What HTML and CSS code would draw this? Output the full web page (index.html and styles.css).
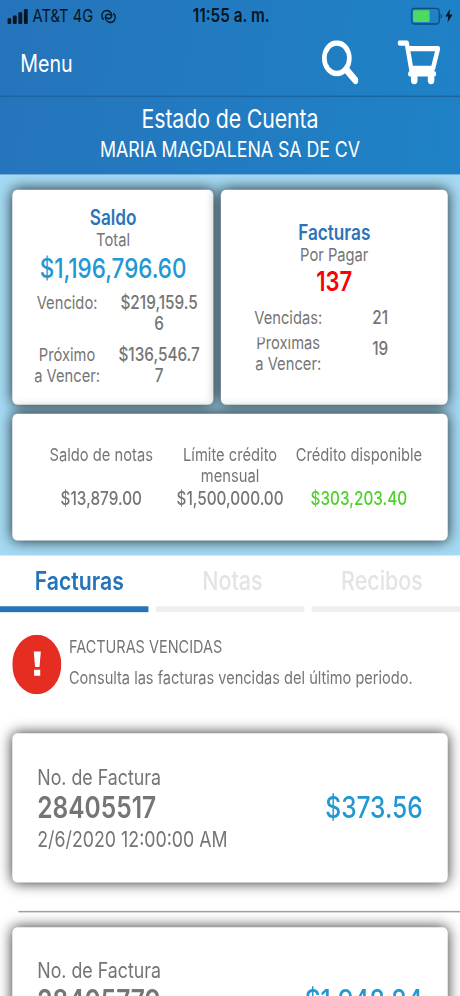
FILE: index.html
```html
<!DOCTYPE html>
<html lang="es">
<head>
    <meta charset="UTF-8">
    <meta name="viewport" content="width=device-width, initial-scale=1.0">
    <title>Estado de Cuenta</title>
    <link rel="stylesheet" href="styles.css">
</head>
<body>
    <div class="screen">
        <header class="top">
            <div class="status">
                <div class="carrier">
                    <svg class="signal" viewBox="0 0 17 10">
                        <rect x="0" y="6.2" width="3.1" height="3.8" rx="0.8"/>
                        <rect x="4.5" y="4.3" width="3.1" height="5.7" rx="0.8"/>
                        <rect x="9" y="2.2" width="3.1" height="7.8" rx="0.8"/>
                        <rect x="13.5" y="0" width="3.1" height="10" rx="0.8"/>
                    </svg>
                    <span>AT&amp;T 4G</span>
                    <svg class="link" viewBox="0 0 13 10">
                        <path d="M2.6 7.1A3.2 3.2 0 0 1 3.4 1.3A4.2 3.6 0 0 1 9.2 4.3A2.6 2.4 0 0 1 4.6 5.6"/>
                        <path d="M10.4 2.9A3.2 3.2 0 0 1 9.6 8.7A4.2 3.6 0 0 1 3.8 5.7A2.6 2.4 0 0 1 8.4 4.4"/>
                    </svg>
                </div>
                <div class="clock">11:55 a. m.</div>
                <div class="power">
                    <svg class="battery" viewBox="0 0 26 12">
                        <rect x="0.5" y="0.5" width="22.6" height="10.6" rx="2.4" fill="none" stroke="#0e4a7c"/>
                        <rect x="1.8" y="1.8" width="13.4" height="8" rx="1" fill="#4cd964"/>
                        <path d="M24.2 4v3.8c1.5-.6 1.5-3.2 0-3.8z" fill="#0e4a7c"/>
                    </svg>
                    <svg class="bolt" viewBox="0 0 6 9">
                        <path d="M3.8 0L0 5.1h2.5L1.8 9L6 3.7H3.3z"/>
                    </svg>
                </div>
            </div>
            <nav class="nav">
                <a class="menu">Menu</a>
                <svg class="search" viewBox="0 0 30 30">
                    <circle cx="12.6" cy="12" r="10.2" stroke-width="3.8"/>
                    <path d="M20.2 19.5L27.8 26.8" stroke-width="5"/>
                </svg>
                <svg class="cart" viewBox="0 0 35 30">
                    <path d="M2 1.8H7.6L11.4 20" stroke-width="3.6"/>
                    <path d="M9 5.6H33L29 18.8H12" stroke-width="3.6"/>
                    <path d="M10.6 22.4H29.6" stroke-width="3.8"/>
                    <path d="M13.7 25.2V26.7M27.4 25.2V26.7" stroke-width="5.4"/>
                </svg>
            </nav>
            <div class="title">
                <h1>Estado de Cuenta</h1>
                <p>MARIA MAGDALENA SA DE CV</p>
            </div>
        </header>

        <section class="summary">
            <div class="card balance">
                <h2>Saldo</h2>
                <p class="sub">Total</p>
                <p class="total">$1,196,796.60</p>
                <div class="pair">
                    <span>Vencido:</span>
                    <b>$219,159.5<br>6</b>
                </div>
                <div class="pair next">
                    <span>Próximo<br>a Vencer:</span>
                    <b>$136,546.7<br>7</b>
                </div>
            </div>
            <div class="card bills">
                <h2>Facturas</h2>
                <p class="sub">Por Pagar</p>
                <p class="total red">137</p>
                <div class="pair">
                    <span>Vencidas:</span>
                    <b>21</b>
                </div>
                <div class="pair clip">
                    <span>Próximas<br>a Vencer:</span>
                    <b>19</b>
                </div>
            </div>
            <div class="card credit">
                <span>Saldo de notas</span>
                <span>Límite crédito<br>mensual</span>
                <span>Crédito disponible</span>
                <b>$13,879.00</b>
                <b>$1,500,000.00</b>
                <b class="green">$303,203.40</b>
            </div>
        </section>

        <div class="tabs">
            <a class="tab active">Facturas</a>
            <a class="tab notes">Notas</a>
            <a class="tab receipts">Recibos</a>
        </div>

        <div class="notice">
            <svg class="alert" viewBox="0 0 40 40">
                <circle cx="20" cy="20" r="20" fill="#e52d22"/>
                <path d="M17.5 11.3h5.8l-1.1 10.4h-3.6zM17.8 23.6h5v3.9h-5z" fill="#fff"/>
            </svg>
            <div>
                <h3>FACTURAS VENCIDAS</h3>
                <p>Consulta las facturas vencidas del último periodo.</p>
            </div>
        </div>

        <div class="card invoice">
            <div>
                <p class="label">No. de Factura</p>
                <p class="number">28405517</p>
                <p class="date">2/6/2020 12:00:00 AM</p>
            </div>
            <span class="amount">$373.56</span>
        </div>
        <hr>
        <div class="card invoice">
            <div>
                <p class="label">No. de Factura</p>
                <p class="number">28405779</p>
            </div>
            <span class="amount">$1,948.84</span>
        </div>
    </div>
</body>
</html>
```

FILE: styles.css
```css
* {
    box-sizing: border-box;
}
html, body {
    width: 460px;
    height: 996px;
    margin: 0;
    overflow: hidden;
    background-color: #fff;
}
h1, h2, h3, p {
    margin: 0;
    font-weight: 400;
}
b {
    font-size: 12.5px;
    font-weight: 500;
}
/* 375x667 phone layout stretched to the window */
.screen {
    width: 375px;
    height: 667px;
    overflow: hidden;
    transform: scale(1.22667, 1.49325);
    transform-origin: 0 0;
    font-family: Inter, "Liberation Sans", sans-serif;
    font-size: 12px;
    line-height: 14px;
    color: #757575;
    white-space: nowrap;
}

/* header */
.top {
    height: 116.5px;
    background: linear-gradient(100deg, #2574bb, #1f82c6);
    color: #fff;
}
.status {
    display: grid;
    grid-template-columns: 1fr auto 1fr;
    align-items: center;
    height: 20px;
    padding: 1px 6px 0 6px;
    color: #061523;
    font-size: 12px;
}
.carrier, .power {
    display: flex;
    align-items: center;
}
.signal {
    width: 17px;
    height: 10px;
    margin-right: 3.5px;
    fill: #061523;
}
.link {
    width: 13px;
    height: 10px;
    margin-left: 6px;
    fill: none;
    stroke: #061523;
    stroke-width: 1;
}
.clock {
    padding-left: 2px;
    font-size: 12.5px;
    font-weight: 600;
}
.power {
    justify-content: flex-end;
}
.battery {
    width: 26px;
    height: 12px;
}
.bolt {
    width: 6px;
    height: 9px;
    margin-left: 2.5px;
    fill: #061523;
}
.nav {
    display: flex;
    height: 44.5px;
    padding: 7px 16px 0 16.5px;
    border-bottom: 1px solid #1c65a5;
}
.menu {
    flex: 1;
    font-size: 16px;
    line-height: 31px;
}
.search, .cart {
    height: 30px;
    fill: none;
    stroke: #fff;
    stroke-linecap: round;
    stroke-linejoin: round;
}
.search {
    width: 30px;
    margin-right: 32px;
}
.cart {
    width: 35px;
}
.title {
    padding-top: 5px;
    text-align: center;
}
.title h1 {
    font-size: 17.4px;
    line-height: 20.5px;
    letter-spacing: -0.1px;
}
.title p {
    font-size: 14.5px;
    line-height: 19px;
    letter-spacing: -0.05px;
}

/* balance cards */
.summary {
    display: grid;
    grid-template-columns: 164px 185px;
    grid-template-rows: 144.5px 85.5px;
    gap: 5.8px;
    height: 255.2px;
    padding: 10px 10.2px;
    background-color: #a5daf4;
}
.card {
    border-radius: 4px;
    background-color: #fff;
    box-shadow: 0 0 10px rgba(0, 0, 0, 0.8);
}
.balance, .bills {
    text-align: center;
}
.balance {
    padding-top: 10px;
}
.bills {
    padding-top: 20px;
}
.card h2 {
    color: #2b74b8;
    font-size: 14px;
    font-weight: 600;
    line-height: 17px;
}
.sub {
    line-height: 14.5px;
}
.total {
    color: #2197d4;
    font-size: 18.3px;
    font-weight: 500;
    line-height: 22px;
}
.red {
    color: #fb0007;
    font-size: 18px;
    font-weight: 600;
}
.pair {
    display: grid;
    grid-template-columns: 75px 75px;
    justify-content: center;
    padding-top: 6.3px;
}
.balance .next {
    padding-top: 7px;
}
.bills .pair {
    padding-top: 5.8px;
}
/* this row is too short for its first line */
.bills .clip {
    height: 30px;
    padding-top: 0;
    margin-top: 6.5px;
    overflow: hidden;
}
.clip span {
    margin-top: -3.4px;
}
.clip b {
    margin-top: 0.5px;
}
.credit {
    display: grid;
    grid-column: 1 / 3;
    grid-template-columns: 105px 105px 105px;
    grid-template-rows: 29.7px 14px;
    justify-content: center;
    padding-top: 21px;
    text-align: center;
}
.green {
    color: #4fd02b;
}

/* tabs */
.tabs {
    display: grid;
    grid-template-columns: repeat(3, 1fr);
    gap: 6.4px;
    height: 37.5px;
}
.tab {
    border-bottom: 4px solid #efefef;
    color: #e4e4e4;
    font-size: 17.5px;
    font-weight: 500;
    line-height: 34.5px;
    text-align: center;
}
.active {
    padding-left: 8.5px;
    border-color: #2573b9;
    color: #2573b9;
    font-size: 17.3px;
    font-weight: 600;
}
.notes {
    padding-left: 4px;
}
.receipts {
    padding-right: 6.5px;
}

/* notice */
.notice {
    display: flex;
    gap: 6px;
    height: 82px;
    padding: 16.2px 0 0 10.2px;
}
.alert {
    width: 40px;
    height: 40px;
}
.notice h3 {
    padding-top: 0.8px;
    font-size: 11.8px;
    line-height: 15px;
}
.notice p {
    padding-top: 4.5px;
    font-size: 11.9px;
    line-height: 15px;
}

/* invoices */
.invoice {
    display: flex;
    justify-content: space-between;
    height: 100px;
    margin: 0 10.2px;
    padding: 19.5px 20.2px 0;
}
.label, .date {
    font-size: 14.5px;
    line-height: 20px;
}
.number, .amount {
    font-size: 20px;
    line-height: 21.5px;
}
.number {
    font-weight: 600;
}
.amount {
    padding-top: 20px;
    color: #2197d4;
    font-weight: 500;
}
hr {
    height: 1px;
    margin: 19px 0 9.5px 15.3px;
    border: 0;
    background-color: #a0a0a0;
}
```
